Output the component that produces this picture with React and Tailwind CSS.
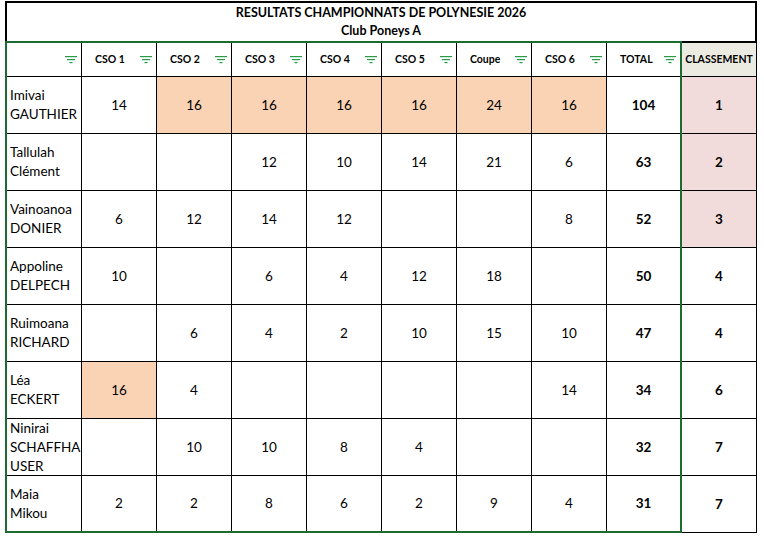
const cols = ["CSO 1", "CSO 2", "CSO 3", "CSO 4", "CSO 5", "Coupe", "CSO 6"];

const rows = [
  { name: ["Imivai", "GAUTHIER"], scores: ["14", "16", "16", "16", "16", "24", "16"], hi: [1, 2, 3, 4, 5, 6], total: "104", rank: "1", top: true },
  { name: ["Tallulah", "Clément"], scores: ["", "", "12", "10", "14", "21", "6"], hi: [], total: "63", rank: "2", top: true },
  { name: ["Vainoanoa", "DONIER"], scores: ["6", "12", "14", "12", "", "", "8"], hi: [], total: "52", rank: "3", top: true },
  { name: ["Appoline", "DELPECH"], scores: ["10", "", "6", "4", "12", "18", ""], hi: [], total: "50", rank: "4" },
  { name: ["Ruimoana", "RICHARD"], scores: ["", "6", "4", "2", "10", "15", "10"], hi: [], total: "47", rank: "4" },
  { name: ["Léa", "ECKERT"], scores: ["16", "4", "", "", "", "", "14"], hi: [0], total: "34", rank: "6" },
  { name: ["Ninirai", "SCHAFFHA", "USER"], scores: ["", "10", "10", "8", "4", "", ""], hi: [], total: "32", rank: "7" },
  { name: ["Maia", "Mikou"], scores: ["2", "2", "8", "6", "2", "9", "4"], hi: [], total: "31", rank: "7" },
];

const FilterIcon = () => (
  <svg width="12" height="8" viewBox="0 0 12 8" className="shrink-0">
    <rect x="0" y="0" width="12" height="1.2" fill="#2a9a47" />
    <rect x="2" y="3" width="8" height="1.2" fill="#2a9a47" />
    <rect x="4.5" y="6" width="3" height="1.2" fill="#2a9a47" />
  </svg>
);

const HeadCell = ({ label, last }) => (
  <div
    className={`flex items-center justify-between pl-[13px] pr-[4px] h-full ${
      last ? "w-[73px]" : "w-[75px] border-r border-black"
    }`}
  >
    <span className="text-[10.5px] font-bold">{label}</span>
    <FilterIcon />
  </div>
);

export default function App() {
  return (
    <div className="w-[764px] h-[537px] bg-white text-black pt-[1px] pl-[5px] font-['Lato','Open_Sans',sans-serif]">
      <div className="w-[752px] h-[42px] border-2 border-black flex flex-col items-center justify-center font-bold text-[12.5px] leading-[18px]">
        <div>RESULTATS CHAMPIONNATS DE POLYNESIE 2026</div>
        <div>Club Poneys A</div>
      </div>
      <div className="flex -mt-[2px]">
        <div className="w-[677px] h-[492px] border-2 border-[#1c6b30] flex flex-col">
          <div className="flex h-[34px] border-b border-black">
            <div className="w-[75px] border-r border-black flex items-center justify-end pr-[4px]">
              <FilterIcon />
            </div>
            {cols.map((c) => (
              <HeadCell key={c} label={c} />
            ))}
            <HeadCell label="TOTAL" last />
          </div>
          {rows.map((r, i) => (
            <div
              key={i}
              className={`flex text-[13.5px] ${
                i === rows.length - 1 ? "h-[55px]" : "h-[57px] border-b border-black"
              }`}
            >
              <div className="w-[75px] border-r border-black flex flex-col justify-center pl-[3px] leading-[19px]">
                {r.name.map((n) => (
                  <div key={n}>{n}</div>
                ))}
              </div>
              {r.scores.map((s, j) => (
                <div
                  key={j}
                  className={`w-[75px] border-r border-black flex items-center justify-center ${
                    r.hi.includes(j) ? "bg-[#f9d3b4]" : ""
                  }`}
                >
                  {s}
                </div>
              ))}
              <div className="w-[73px] flex items-center justify-center font-bold">
                {r.total}
              </div>
            </div>
          ))}
        </div>
        <div className="w-[75px] mt-[2px] flex flex-col border-r border-black">
          <div className="h-[34px] border-b border-black bg-[#ecebe2] flex items-center justify-center text-[10.5px] font-bold">
            CLASSEMENT
          </div>
          {rows.map((r, i) => (
            <div
              key={i}
              className={`h-[57px] border-b border-black flex items-center justify-center text-[13.5px] font-bold ${
                r.top ? "bg-[#f2dcdb]" : ""
              }`}
            >
              {r.rank}
            </div>
          ))}
        </div>
      </div>
    </div>
  );
}
